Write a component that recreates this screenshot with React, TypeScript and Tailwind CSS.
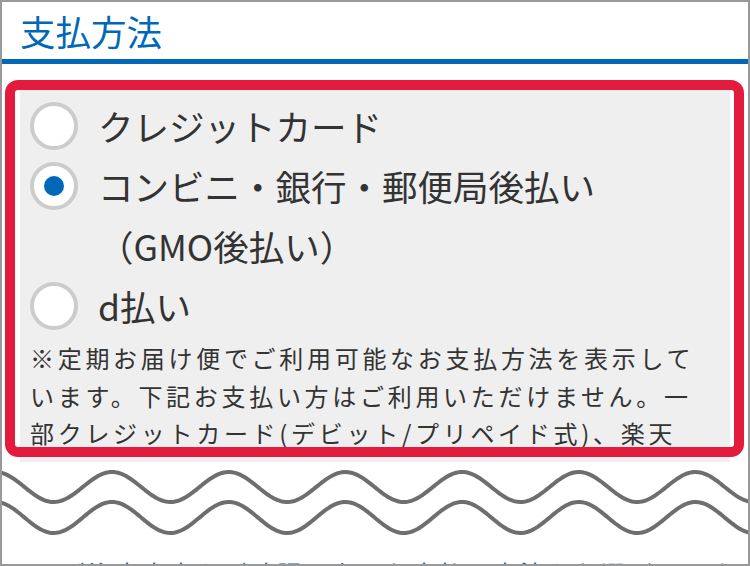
import React from "react";

const jp = { fontFamily: '"Noto Sans CJK JP", "Noto Sans", sans-serif' };

const options = [
  { id: "card", label: ["クレジットカード"], checked: false },
  { id: "gmo", label: ["コンビニ・銀行・郵便局後払い", "（GMO後払い）"], checked: true },
  { id: "d", label: ["d払い"], checked: false },
];

function wavePath(cy: number, amp: number, period: number, peakX: number) {
  const pts: string[] = [];
  for (let x = -10; x <= 760; x += 2) {
    const y = cy - amp * Math.cos((2 * Math.PI * (x - peakX)) / period);
    pts.push(`${x},${y.toFixed(2)}`);
  }
  return "M" + pts.join(" L");
}

function Radio({ checked }: { checked: boolean }) {
  return (
    <div className="h-[60px] flex items-center shrink-0">
      <div className="w-[48px] h-[48px] rounded-full border-4 border-[#cccccc] bg-white flex items-center justify-center">
        {checked && <div className="w-[20px] h-[20px] rounded-full bg-[#0068b7]" />}
      </div>
    </div>
  );
}

export default function App() {
  return (
    <div
      className="relative w-[750px] h-[566px] border-2 border-[#999999] bg-white overflow-hidden"
      style={jp}
    >
      <h2 className="h-[57px] pl-[18px] text-[35.5px] leading-[57px] text-[#0068b7] font-normal">
        支払方法
      </h2>
      <div className="h-[5px] bg-[#0068b7]" />

      <div className="mt-[24px] mx-[18px] h-[374px] overflow-hidden bg-[#efefef] pt-[8px] pl-[10px] pr-[22px] text-[#333333]">
        {options.map((o) => (
          <div key={o.id} className="flex items-start gap-[20px]">
            <Radio checked={o.checked} />
            <div className="text-[35.5px] leading-[60px]">
              {o.label.map((l, i) => (
                <div key={i}>{l}</div>
              ))}
            </div>
          </div>
        ))}
        <p className="mt-[3px] text-[24px] leading-[37.5px] tracking-[3.7px]">
          ※定期お届け便でご利用可能なお支払方法を表示しています。下記お支払い方はご利用いただけません。一部クレジットカード(デビット/プリペイド式)、楽天
          <br />
          ペイ、Amazon Pay
        </p>
      </div>

      <svg className="block" width="746" height="80" viewBox="0 0 746 80">
        <path d={wavePath(25, 15, 116.7, 110)} fill="none" stroke="#6e6e6e" strokeWidth="4" />
        <path d={wavePath(55.5, 15.5, 116.7, 110)} fill="none" stroke="#6e6e6e" strokeWidth="4" />
      </svg>

      <p className="mt-[19px] pl-[32px] text-[24px] leading-[24px] tracking-[3px] text-[#0068b7]">
        ※ご注文内容をご確認の上、お支払い方法をお選びください
      </p>

      <div className="absolute left-[3px] top-[78px] w-[739px] h-[377px] border-[10px] border-[#e31b3c] rounded-[13px] pointer-events-none" />
    </div>
  );
}
